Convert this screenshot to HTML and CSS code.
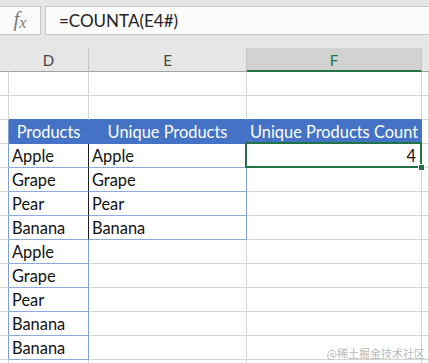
FILE: index.html
```html
<!DOCTYPE html>
<html>
<head>
  <title>Unique Products Count</title>
  <link rel="stylesheet" href="styles.css">
</head>
<body>
  <div class="topbar">
    <div class="fx-box"><span class="fx">f<span class="fx-x">x</span></span></div>
    <div class="formula">=COUNTA(E4#)</div>
  </div>
  <div class="band"></div>

  <div class="sheet">
    <!-- column headers -->
    <div class="cell colhead"></div>
    <div class="cell colhead">D</div>
    <div class="cell colhead">E</div>
    <div class="cell colhead selected">F</div>
    <div class="cell colhead rest"></div>

    <!-- row 1 -->
    <div class="cell stub"></div><div class="cell"></div><div class="cell"></div><div class="cell"></div><div class="cell"></div>
    <!-- row 2 -->
    <div class="cell stub"></div><div class="cell above"></div><div class="cell above"></div><div class="cell above"></div><div class="cell"></div>

    <!-- table header -->
    <div class="cell stub edge"></div>
    <div class="cell th">Products</div>
    <div class="cell th">Unique Products</div>
    <div class="cell th">Unique Products Count</div>
    <div class="cell"></div>

    <div class="cell stub edge"></div><div class="cell td split">Apple</div><div class="cell td">Apple</div><div class="cell num active">4</div><div class="cell"></div>
    <div class="cell stub edge"></div><div class="cell td split">Grape</div><div class="cell td">Grape</div><div class="cell"></div><div class="cell"></div>
    <div class="cell stub edge"></div><div class="cell td split">Pear</div><div class="cell td">Pear</div><div class="cell"></div><div class="cell"></div>
    <div class="cell stub edge"></div><div class="cell td split">Banana</div><div class="cell td">Banana</div><div class="cell"></div><div class="cell"></div>

    <div class="cell stub edge"></div><div class="cell td">Apple</div><div class="cell"></div><div class="cell"></div><div class="cell"></div>
    <div class="cell stub edge"></div><div class="cell td">Grape</div><div class="cell"></div><div class="cell"></div><div class="cell"></div>
    <div class="cell stub edge"></div><div class="cell td">Pear</div><div class="cell"></div><div class="cell"></div><div class="cell"></div>
    <div class="cell stub edge"></div><div class="cell td">Banana</div><div class="cell"></div><div class="cell"></div><div class="cell"></div>
    <div class="cell stub edge"></div><div class="cell td">Banana</div><div class="cell"></div><div class="cell"></div><div class="cell"></div>

    <div class="cell stub"></div><div class="cell"></div><div class="cell"></div><div class="cell"></div><div class="cell"></div>
  </div>

  <div class="watermark">@稀土掘金技术社区</div>
</body>
</html>
```

FILE: styles.css
```css
html, body {
  margin: 0;
  height: 100%;
  overflow: hidden;
}
body {
  background-color: #e6e6e6;
  font-family: Lato, "Liberation Sans", sans-serif;
  position: relative;
}
.topbar {
  display: flex;
  gap: 4px;
  padding-top: 6px;
  height: 30px;
}
.fx-box {
  width: 41px;
  height: 29px;
  box-sizing: border-box;
  border: 1px solid #c6c6c6;
  border-left: none;
  background-color: #fbfbfb;
  display: flex;
  align-items: center;
  justify-content: center;
}
.fx {
  font-family: "Liberation Serif", serif;
  font-style: italic;
  font-size: 21px;
  color: #7a7a7a;
  margin-top: -3px;
}
.fx-x {
  font-size: 16px;
  position: relative;
  top: 2px;
}
.formula {
  flex-grow: 1;
  height: 29px;
  box-sizing: border-box;
  border: 1px solid #c6c6c6;
  border-right: none;
  background-color: #fbfbfb;
  padding-left: 13px;
  font-size: 17px;
  line-height: 27px;
  color: #222;
}
.band {
  height: 12px;
}
.sheet {
  display: grid;
  grid-template-columns: 9px 80px 158px 175px 1fr;
  grid-auto-rows: 24px;
  background-color: #fff;
}
.cell {
  box-sizing: border-box;
  border-right: 1px solid #d4d4d4;
  border-bottom: 1px solid #d4d4d4;
  font-size: 16.4px;
  line-height: 24px;
  color: #111;
  white-space: nowrap;
}
.colhead {
  background-color: #e6e6e6;
  border-right-color: #c4c4c4;
  border-bottom-color: #a2a2a2;
  text-align: center;
  font-size: 15px;
  color: #444;
}
.colhead:first-child {
  border-right-color: #e6e6e6;
}
.colhead.selected {
  background-color: #d2d2d2;
  border-bottom: 2px solid #217346;
  color: #217346;
}
.colhead.rest {
  border-right: none;
}
.above {
  border-bottom-color: #4472c4;
}
.stub.edge {
  border-right-color: #7f9fd3;
}
.th {
  background-color: #4472c4;
  border-right-color: #4472c4;
  border-bottom-color: #4472c4;
  color: #fff;
  text-align: center;
}
.td {
  padding-left: 3px;
  border-right-color: #7f9fd3;
  border-bottom-color: #8eaadb;
}
.td.split {
  border-right-color: #1e1e1e;
}
.num {
  text-align: right;
  padding-right: 5px;
}
.active {
  position: relative;
}
.active::after {
  content: "";
  position: absolute;
  top: -2px;
  left: -2px;
  right: -1px;
  bottom: -1px;
  border: 2px solid #217346;
}
.active::before {
  content: "";
  position: absolute;
  right: -4px;
  bottom: -4px;
  width: 5px;
  height: 5px;
  background-color: #217346;
  border: 1px solid #fff;
  z-index: 1;
}
.watermark {
  position: absolute;
  right: 4px;
  bottom: 2px;
  font-family: "Noto Sans CJK SC", sans-serif;
  font-size: 11px;
  color: #b8b8b8;
}
```
